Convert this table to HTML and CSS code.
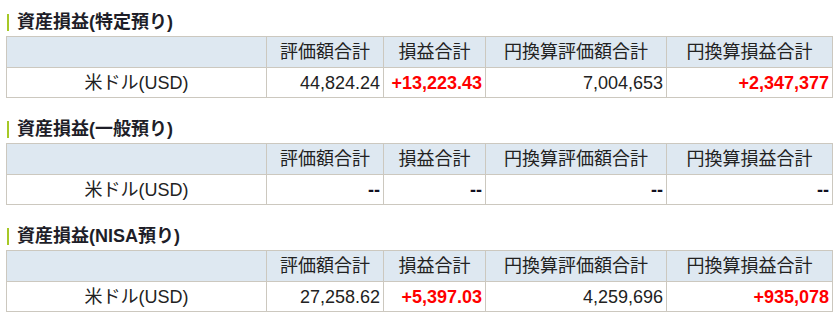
FILE: index.html
```html
<!DOCTYPE html>
<html lang="ja">
<head>
<meta charset="utf-8">
<title>資産損益</title>
<link rel="stylesheet" href="styles.css">
</head>
<body>
<div class="page">
  <section class="block">
    <h2 class="title">資産損益(特定預り)</h2>
    <table class="pl">
      <colgroup><col class="c1"><col class="c2"><col class="c3"><col class="c4"><col class="c5"></colgroup>
      <thead>
        <tr><th></th><th>評価額合計</th><th>損益合計</th><th>円換算評価額合計</th><th>円換算損益合計</th></tr>
      </thead>
      <tbody>
        <tr><td class="name">米ドル(USD)</td><td class="num">44,824.24</td><td class="num plus">+13,223.43</td><td class="num">7,004,653</td><td class="num plus">+2,347,377</td></tr>
      </tbody>
    </table>
  </section>
  <section class="block">
    <h2 class="title">資産損益(一般預り)</h2>
    <table class="pl">
      <colgroup><col class="c1"><col class="c2"><col class="c3"><col class="c4"><col class="c5"></colgroup>
      <thead>
        <tr><th></th><th>評価額合計</th><th>損益合計</th><th>円換算評価額合計</th><th>円換算損益合計</th></tr>
      </thead>
      <tbody>
        <tr><td class="name">米ドル(USD)</td><td class="num none">--</td><td class="num none">--</td><td class="num none">--</td><td class="num none">--</td></tr>
      </tbody>
    </table>
  </section>
  <section class="block">
    <h2 class="title">資産損益(NISA預り)</h2>
    <table class="pl">
      <colgroup><col class="c1"><col class="c2"><col class="c3"><col class="c4"><col class="c5"></colgroup>
      <thead>
        <tr><th></th><th>評価額合計</th><th>損益合計</th><th>円換算評価額合計</th><th>円換算損益合計</th></tr>
      </thead>
      <tbody>
        <tr><td class="name">米ドル(USD)</td><td class="num">27,258.62</td><td class="num plus">+5,397.03</td><td class="num">4,259,696</td><td class="num plus">+935,078</td></tr>
      </tbody>
    </table>
  </section>
</div>
</body>
</html>
```

FILE: styles.css
```css
html, body {
  margin: 0;
  padding: 0;
  background: #ffffff;
}
body {
  font-family: "Liberation Sans", "Noto Sans CJK JP", sans-serif;
  font-size: 18px;
  color: #222222;
}
.page {
  padding: 10px 0 0 6px;
}
.block {
  margin-bottom: 19px;
}
.title {
  display: flex;
  align-items: center;
  height: 24px;
  margin: 0 0 2px 1px;
  font-size: 18px;
  font-weight: bold;
  line-height: 20px;
  color: #1e1e28;
}
.title::before {
  content: "";
  flex: none;
  width: 2px;
  height: 17px;
  background: #a6c826;
  margin-right: 8px;
}
.pl {
  width: 826px;
  table-layout: fixed;
  border-collapse: collapse;
}
.c1 { width: 260px; }
.c2 { width: 117px; }
.c3 { width: 102px; }
.c4 { width: 181px; }
.c5 { width: 166px; }
.pl th,
.pl td {
  border: 1px solid #ccc8bf;
  padding: 0 3px;
  line-height: 20px;
  white-space: nowrap;
}
.pl th {
  height: 30px;
  background: #dee8f1;
  font-weight: normal;
  text-align: center;
}
.pl td {
  height: 29px;
}
.name {
  text-align: center;
}
.num {
  text-align: right;
}
.plus {
  color: #ff0000;
  font-weight: bold;
}
.none {
  font-weight: bold;
  color: #111122;
}
```
